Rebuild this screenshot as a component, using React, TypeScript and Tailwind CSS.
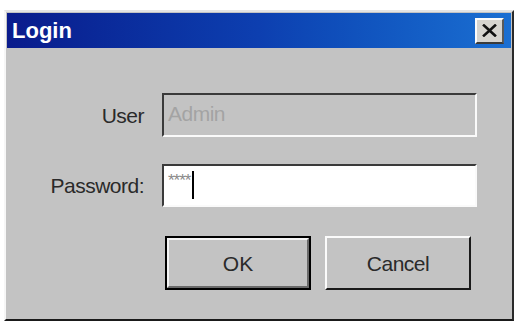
import React from 'react';

const font = { fontFamily: '"Liberation Sans", Arial, sans-serif' };

const CloseIcon = () => (
  <svg width="15" height="13" viewBox="0 0 15 13">
    <path d="M2 1.5 L13 11.5 M13 1.5 L2 11.5" stroke="#111" strokeWidth="2.6" strokeLinecap="square" />
  </svg>
);

const App = () => {
  return (
    <div className="w-[518px] h-[323px] bg-white pl-[4px] pt-[10px]" style={font}>
      <div className="w-[510px] h-[311px] bg-[#c3c3c3] border-2 border-t-[#e4e4e4] border-l-[#f6f6f6] border-r-[#2a2a2a] border-b-[#1a1a1a] p-[1px]">
        <div className="h-[35px] flex items-center justify-between pl-[5px] pr-[7px] bg-gradient-to-r from-[#0a1b8c] via-[#0d3fb0] to-[#1b6fd2]">
          <span className="text-white font-bold text-[22px] leading-none">Login</span>
          <div className="w-[29px] h-[26px] bg-[#d6d4cf] border-2 border-t-[#fbfbfb] border-l-[#fbfbfb] border-r-[#5a5a5a] border-b-[#3a3a3a] flex items-center justify-center">
            <CloseIcon />
          </div>
        </div>
        <div className="pt-[45px] pl-[3px]">
          <div className="grid grid-cols-[134px_315px] gap-x-[18px] items-center">
            <span className="text-right text-[21px] text-[#2a2a2a] leading-none tracking-[-0.5px]">User</span>
            <div className="h-[44px] bg-[#c3c3c3] border-2 border-t-[#3a3a3a] border-l-[#3a3a3a] border-r-[#fafafa] border-b-[#fafafa] flex items-center pl-[4px]">
              <span className="text-[21px] text-[#a3a3a3] leading-none -mt-[3px] tracking-[-0.5px]">Admin</span>
            </div>
            <span className="text-right text-[21px] text-[#2a2a2a] leading-none mt-[27px] tracking-[-0.5px]">Password:</span>
            <div className="h-[43px] mt-[27px] bg-white border-2 border-t-[#3a3a3a] border-l-[#3a3a3a] border-r-[#fafafa] border-b-[#fafafa] flex items-start pl-[4px] pt-[5px]">
              <span className="text-[17px] text-[#8a8a8a] leading-none tracking-[-1px] mt-[1px]">****</span>
              <span className="w-[2px] h-[28px] bg-black ml-[2px]"></span>
            </div>
          </div>
          <div className="flex gap-x-[14px] ml-[155px] mt-[29px]">
            <button className="w-[146px] h-[54px] border-2 border-black bg-[#c3c3c3] flex">
              <span className="flex-1 flex items-center justify-center border-2 border-t-[#f4f4f4] border-l-[#f4f4f4] border-r-[#6a6a6a] border-b-[#6a6a6a] text-[21px] text-[#2a2a2a] leading-none">
                OK
              </span>
            </button>
            <button className="w-[146px] h-[54px] bg-[#c3c3c3] border-2 border-t-[#fbfbfb] border-l-[#fbfbfb] border-r-[#1a1a1a] border-b-[#1a1a1a] flex items-center justify-center text-[21px] text-[#2a2a2a] leading-none tracking-[-0.5px]">
              Cancel
            </button>
          </div>
        </div>
      </div>
    </div>
  );
};

export default App;
